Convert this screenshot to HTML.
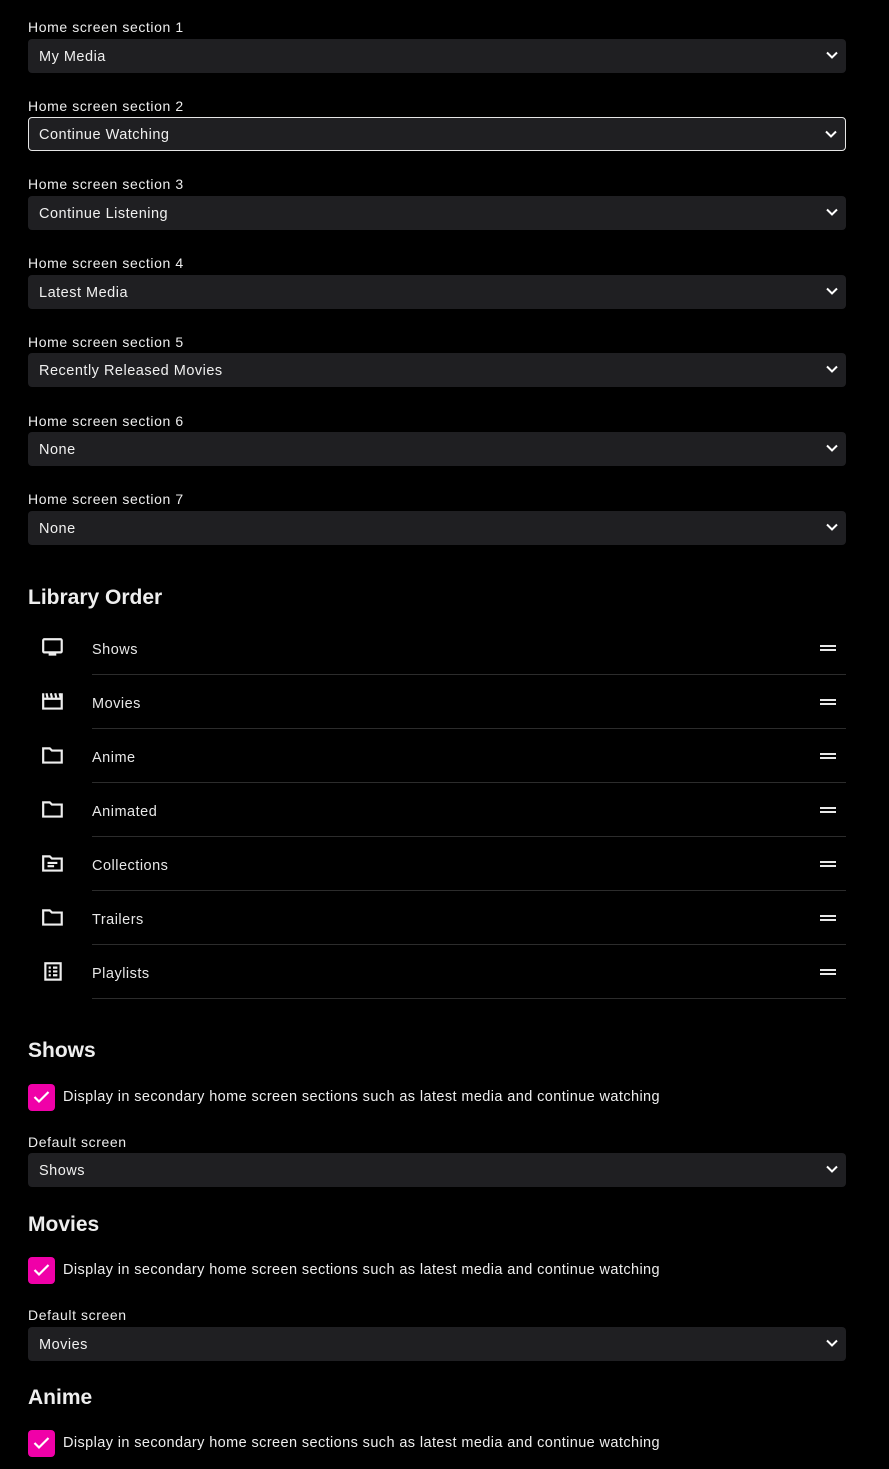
<!DOCTYPE html>
<html><head><meta charset="utf-8"><style>
body{margin:0;background:#000;width:889px;height:1469px;overflow:hidden;position:relative;font-family:"Liberation Sans",sans-serif;color:#e8e8e8;letter-spacing:0.5px}
.lbl{position:absolute;left:28px;font-size:14px;color:#eee;letter-spacing:0.6px}
.sel{position:absolute;left:28px;width:818px;height:34px;background:#1f1f22;border-radius:4px;box-sizing:border-box;font-size:14.5px;line-height:36px;padding-left:11px;color:#f0f0f0}
.sel.f{border:1px solid #e6e6e6;line-height:34px;padding-left:10px}
.sel svg{position:absolute;right:8px;top:11px}
h2{position:absolute;left:28px;margin:0;font-size:21px;font-weight:bold;color:#eee;letter-spacing:0}
.row{position:absolute;left:28px;width:818px;height:54px}
.row .t{position:absolute;left:64px;top:2px;line-height:54px;font-size:14.5px}
.row .d{position:absolute;left:64px;right:0;bottom:0;height:1px;background:#2c2c2c}
.row .ic{position:absolute;left:13px;top:16px}
.row .h{position:absolute;left:792px;top:24px;width:16px;height:2px;background:#e8e8e8;box-shadow:0 4px 0 #e8e8e8}
.cb{position:absolute;left:28px;width:27px;height:27px;background:#f000a8;border-radius:4px}
.cb svg{position:absolute;left:5px;top:6px}
.ct{position:absolute;left:63px;font-size:14.5px;color:#eee;letter-spacing:0.4px}
</style></head><body>
<div class="lbl" style="top:19px">Home screen section 1</div>
<div class="sel" style="top:39px">My Media<svg width="12" height="10" viewBox="0 0 12 10"><path d="M1 2.5l5 5 5-5" stroke="#fff" stroke-width="2" fill="none"/></svg></div>
<div class="lbl" style="top:98px">Home screen section 2</div>
<div class="sel f" style="top:117px">Continue Watching<svg width="12" height="10" viewBox="0 0 12 10"><path d="M1 2.5l5 5 5-5" stroke="#fff" stroke-width="2" fill="none"/></svg></div>
<div class="lbl" style="top:176px">Home screen section 3</div>
<div class="sel" style="top:196px">Continue Listening<svg width="12" height="10" viewBox="0 0 12 10"><path d="M1 2.5l5 5 5-5" stroke="#fff" stroke-width="2" fill="none"/></svg></div>
<div class="lbl" style="top:255px">Home screen section 4</div>
<div class="sel" style="top:275px">Latest Media<svg width="12" height="10" viewBox="0 0 12 10"><path d="M1 2.5l5 5 5-5" stroke="#fff" stroke-width="2" fill="none"/></svg></div>
<div class="lbl" style="top:334px">Home screen section 5</div>
<div class="sel" style="top:353px">Recently Released Movies<svg width="12" height="10" viewBox="0 0 12 10"><path d="M1 2.5l5 5 5-5" stroke="#fff" stroke-width="2" fill="none"/></svg></div>
<div class="lbl" style="top:413px">Home screen section 6</div>
<div class="sel" style="top:432px">None<svg width="12" height="10" viewBox="0 0 12 10"><path d="M1 2.5l5 5 5-5" stroke="#fff" stroke-width="2" fill="none"/></svg></div>
<div class="lbl" style="top:491px">Home screen section 7</div>
<div class="sel" style="top:511px">None<svg width="12" height="10" viewBox="0 0 12 10"><path d="M1 2.5l5 5 5-5" stroke="#fff" stroke-width="2" fill="none"/></svg></div>

<h2 style="top:586px">Library Order</h2>

<div class="row" style="top:621px"><svg class="ic" width="24" height="22" viewBox="0 0 22 20"><rect x="2" y="2" width="17" height="12" rx="1" stroke="#eee" stroke-width="2" fill="none"/><rect x="7" y="15" width="7" height="2" fill="#eee"/></svg><span class="t">Shows</span><div class="h"></div><div class="d"></div></div>
<div class="row" style="top:675px"><svg class="ic" width="24" height="22" viewBox="0 0 22 20"><path d="M2 2v14h17V2" stroke="#eee" stroke-width="2" fill="none"/><path d="M2 7h17M5 2l1 4M9 2l1 4M13 2l1 4M17 2l1 4" stroke="#eee" stroke-width="2"/></svg><span class="t">Movies</span><div class="h"></div><div class="d"></div></div>
<div class="row" style="top:729px"><svg class="ic" width="24" height="22" viewBox="0 0 22 20"><path d="M2 3h6l2 2h9v11H2z" stroke="#eee" stroke-width="2" fill="none"/></svg><span class="t">Anime</span><div class="h"></div><div class="d"></div></div>
<div class="row" style="top:783px"><svg class="ic" width="24" height="22" viewBox="0 0 22 20"><path d="M2 3h6l2 2h9v11H2z" stroke="#eee" stroke-width="2" fill="none"/></svg><span class="t">Animated</span><div class="h"></div><div class="d"></div></div>
<div class="row" style="top:837px"><svg class="ic" width="24" height="22" viewBox="0 0 22 20"><path d="M2 3h6l2 2h9v11H2z" stroke="#eee" stroke-width="2" fill="none"/><path d="M6 9h9M6 12h6" stroke="#eee" stroke-width="2"/></svg><span class="t">Collections</span><div class="h"></div><div class="d"></div></div>
<div class="row" style="top:891px"><svg class="ic" width="24" height="22" viewBox="0 0 22 20"><path d="M2 3h6l2 2h9v11H2z" stroke="#eee" stroke-width="2" fill="none"/></svg><span class="t">Trailers</span><div class="h"></div><div class="d"></div></div>
<div class="row" style="top:945px"><svg class="ic" width="24" height="22" viewBox="0 0 22 20"><rect x="4" y="2" width="14" height="15" stroke="#eee" stroke-width="2" fill="none"/><path d="M7 6h2M11 6h4M7 9.5h2M11 9.5h4M7 13h2M11 13h4" stroke="#eee" stroke-width="2"/></svg><span class="t">Playlists</span><div class="h"></div><div class="d"></div></div>

<h2 style="top:1039px">Shows</h2>
<div class="cb" style="top:1084px"><svg width="17" height="14" viewBox="0 0 17 14"><path d="M1.5 7l4.5 4.5L15.5 2" stroke="#fff" stroke-width="2.2" fill="none"/></svg></div>
<div class="ct" style="top:1089px">Display in secondary home screen sections such as latest media and continue watching</div>
<div class="lbl" style="top:1134px">Default screen</div>
<div class="sel" style="top:1153px">Shows<svg width="12" height="10" viewBox="0 0 12 10"><path d="M1 2.5l5 5 5-5" stroke="#fff" stroke-width="2" fill="none"/></svg></div>

<h2 style="top:1213px">Movies</h2>
<div class="cb" style="top:1257px"><svg width="17" height="14" viewBox="0 0 17 14"><path d="M1.5 7l4.5 4.5L15.5 2" stroke="#fff" stroke-width="2.2" fill="none"/></svg></div>
<div class="ct" style="top:1262px">Display in secondary home screen sections such as latest media and continue watching</div>
<div class="lbl" style="top:1307px">Default screen</div>
<div class="sel" style="top:1327px">Movies<svg width="12" height="10" viewBox="0 0 12 10"><path d="M1 2.5l5 5 5-5" stroke="#fff" stroke-width="2" fill="none"/></svg></div>

<h2 style="top:1386px">Anime</h2>
<div class="cb" style="top:1430px"><svg width="17" height="14" viewBox="0 0 17 14"><path d="M1.5 7l4.5 4.5L15.5 2" stroke="#fff" stroke-width="2.2" fill="none"/></svg></div>
<div class="ct" style="top:1435px">Display in secondary home screen sections such as latest media and continue watching</div>
</body></html>
